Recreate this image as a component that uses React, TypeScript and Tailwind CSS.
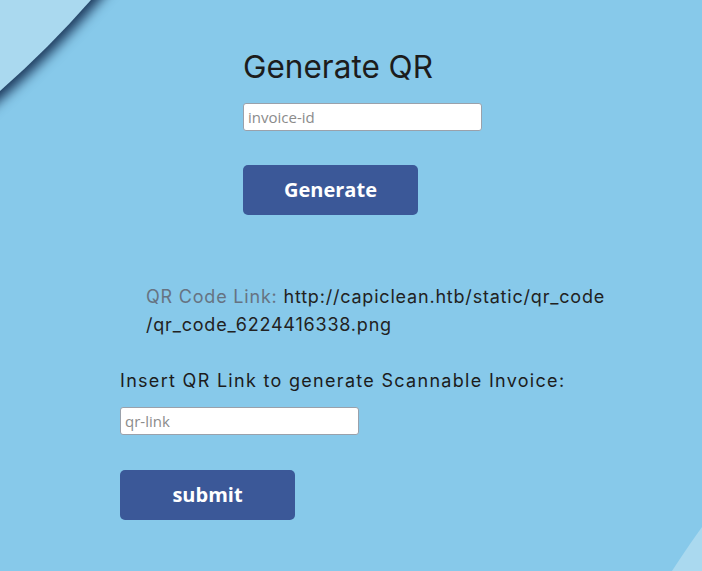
import React from "react";

export default function App() {
  const head = { fontFamily: "Inter, 'Noto Sans', sans-serif" };
  const ui = { fontFamily: "'Open Sans', 'Noto Sans', sans-serif" };

  return (
    <div className="relative min-h-[571px] overflow-hidden bg-[#87c9ea]" style={head}>
      {/* decorative corner arcs */}
      <div className="absolute left-[-1626px] top-[-1626px] h-[1960px] w-[1960px] rounded-full bg-[#aad9ef] shadow-[0_0_12px_7px_#1e3b5e]" />
      <div className="absolute left-[513px] top-[112px] h-[2000px] w-[2000px] rounded-full bg-[#aad9ef]" />

      <div className="relative">
        <div className="pl-[243px] pt-[51px]">
          <h1 className="text-[31.5px] leading-[32px] text-[#1c1c1c]">Generate QR</h1>
          <input
            placeholder="invoice-id"
            style={ui}
            className="mt-[20px] block h-[28px] w-[239px] rounded-[3px] border border-[#9aa1ab] bg-white px-[4px] text-[15px] placeholder:text-[#8b8b8b] outline-none"
          />
          <button
            style={ui}
            className="mt-[34px] h-[50px] w-[175px] rounded-[5px] bg-[#3b5898] text-[20px] font-bold text-white"
          >
            Generate
          </button>
        </div>

        <p className="mt-[68px] pl-[146px] text-[18px] leading-[28px] tracking-[0.8px] text-[#222]">
          <span className="text-[#667382]">QR Code Link: </span>
          http://capiclean.htb/static/qr_code
          <br />
          /qr_code_6224416338.png
        </p>

        <div className="pl-[120px]">
          <p className="mt-[28px] text-[18px] leading-[28px] tracking-[1.3px] text-[#1c1c1c]">
            Insert QR Link to generate Scannable Invoice:
          </p>
          <input
            placeholder="qr-link"
            style={ui}
            className="mt-[12px] block h-[28px] w-[239px] rounded-[3px] border border-[#9aa1ab] bg-white px-[4px] text-[15px] placeholder:text-[#8b8b8b] outline-none"
          />
          <button
            style={ui}
            className="mt-[35px] h-[50px] w-[175px] rounded-[5px] bg-[#3b5898] text-[20px] font-bold text-white"
          >
            submit
          </button>
        </div>
      </div>
    </div>
  );
}
